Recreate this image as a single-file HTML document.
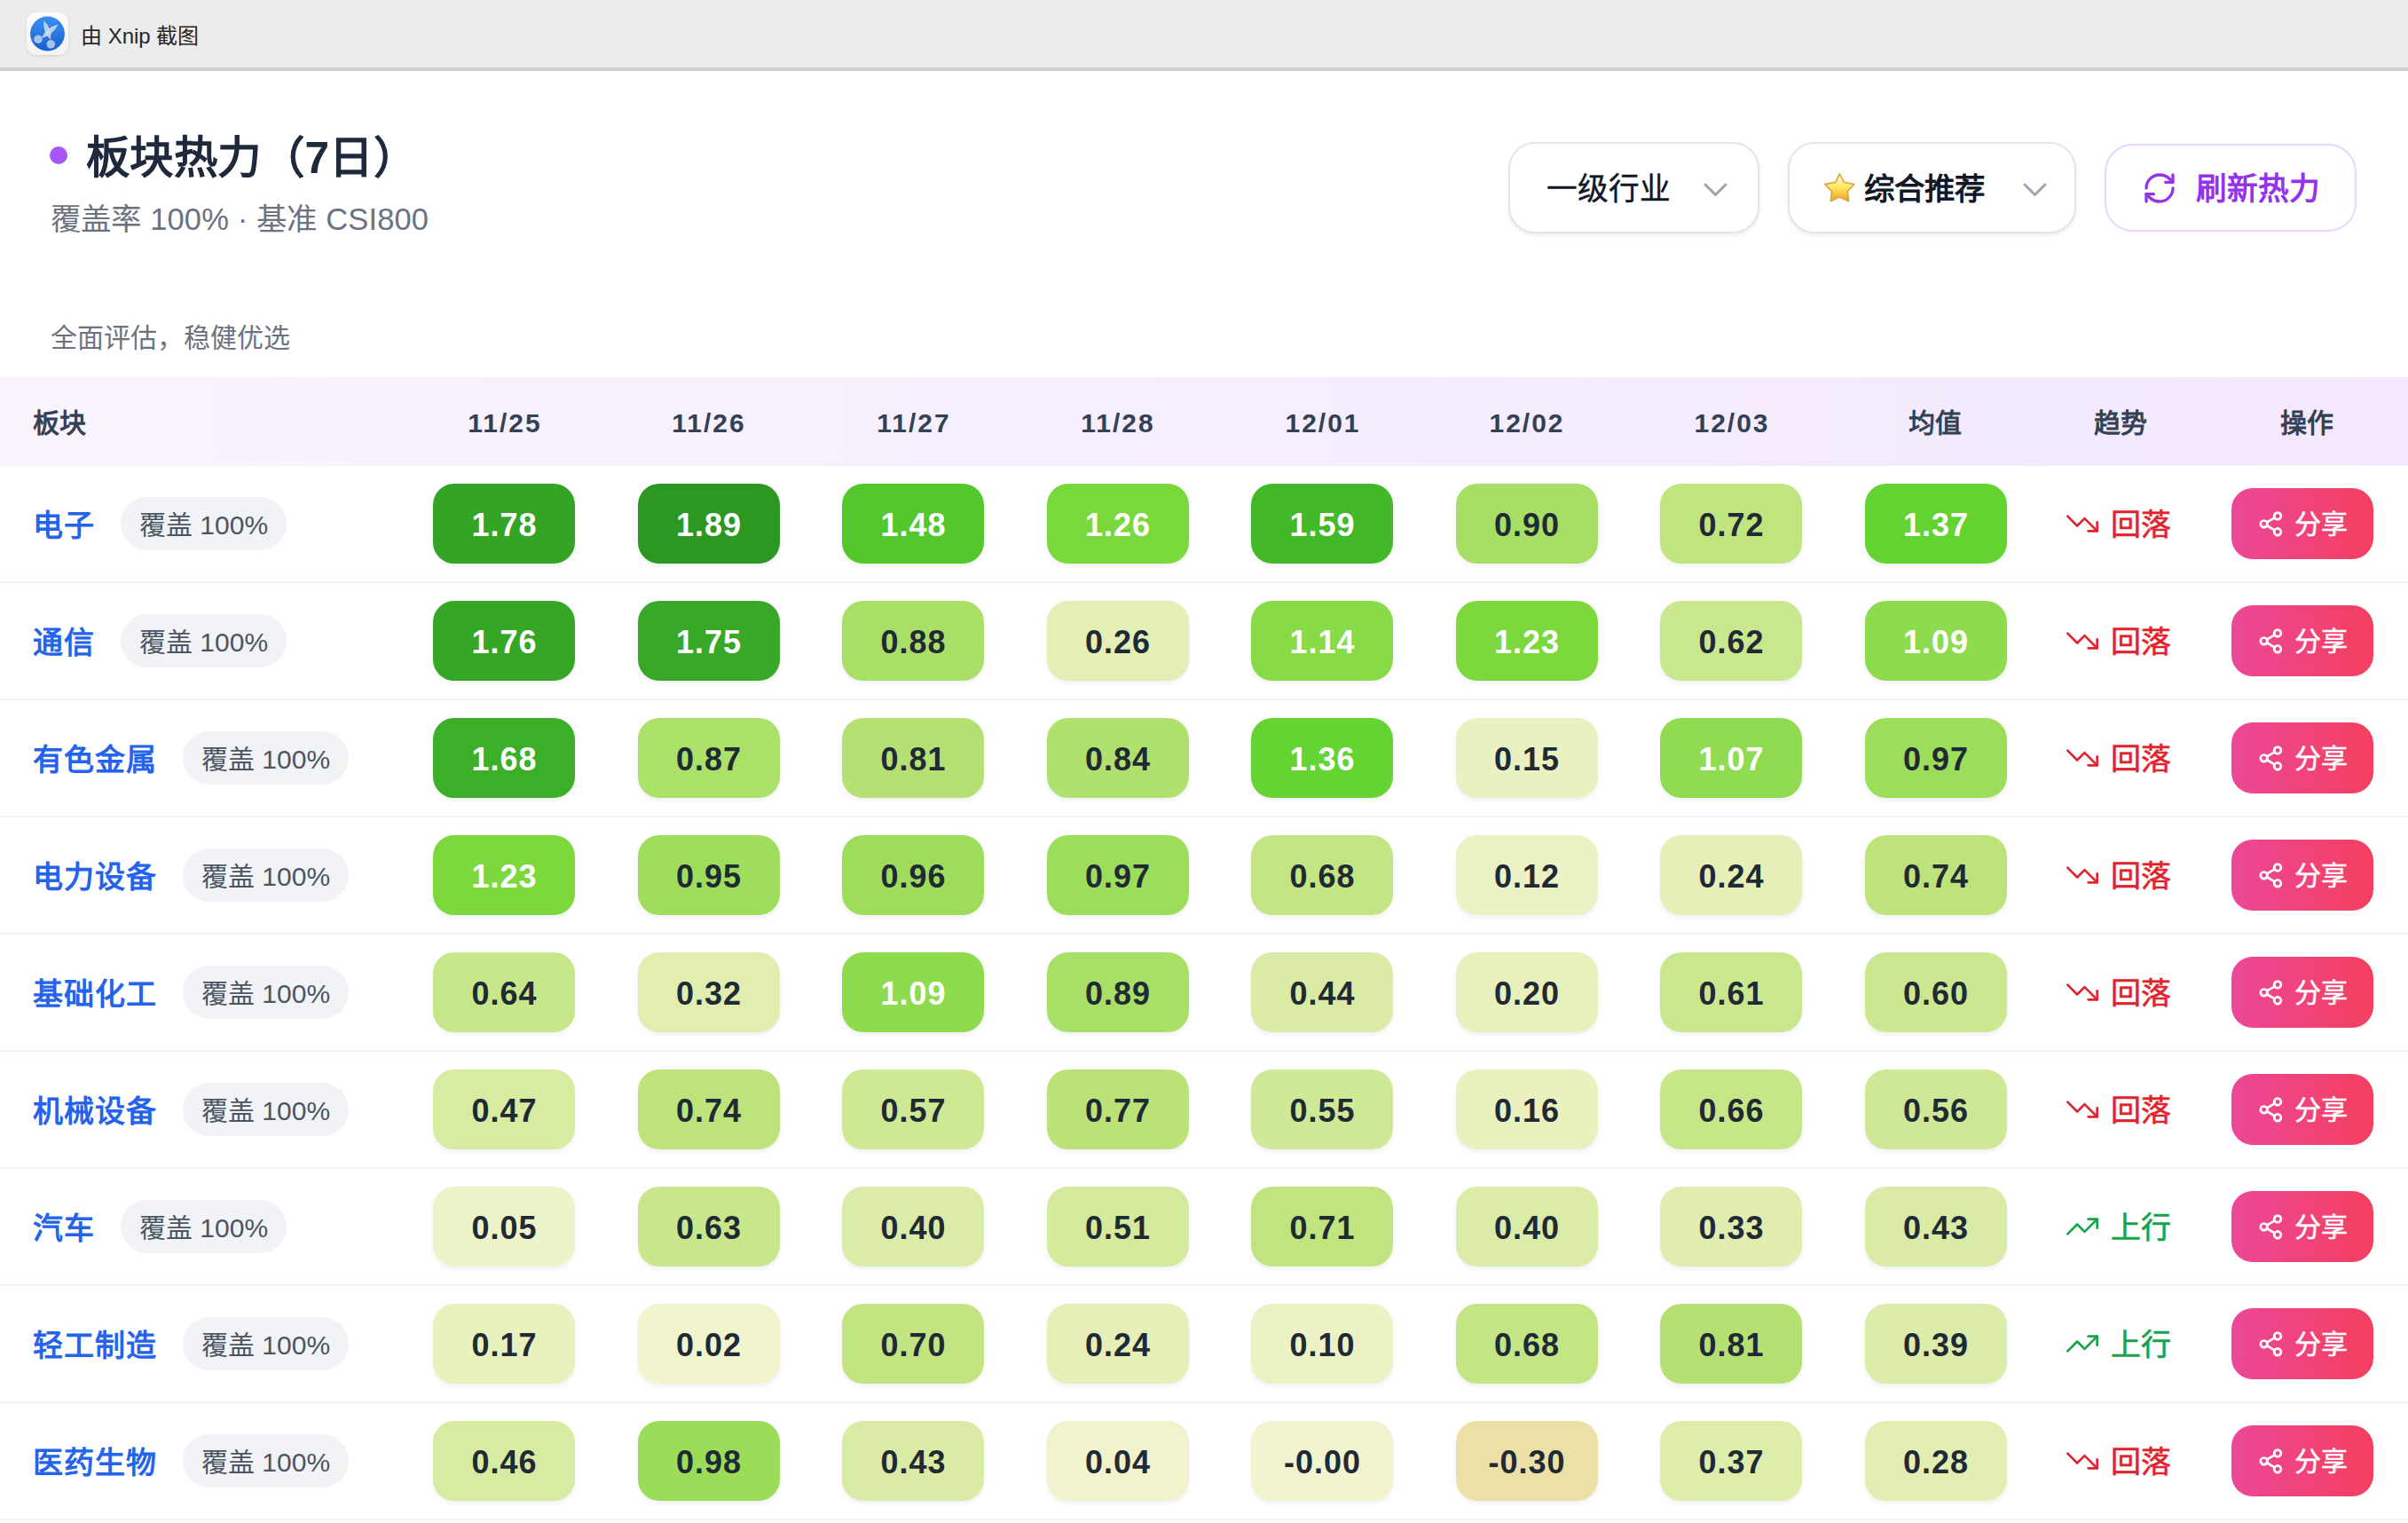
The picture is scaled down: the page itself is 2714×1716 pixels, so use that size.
<!DOCTYPE html>
<html lang="zh-CN">
<head>
<meta charset="utf-8">
<style>
*{box-sizing:border-box;margin:0;padding:0}
html,body{width:2714px;height:1716px;overflow:hidden;background:#fff}
body{position:relative;font-family:"Liberation Sans",sans-serif;color:#1f2937}
.abs{position:absolute;white-space:nowrap}
#topbar{position:absolute;left:0;top:0;width:2714px;height:76px;background:#ececec}
#topline{position:absolute;left:0;top:76px;width:2714px;height:4px;background:#d1d1d1}
#appicon{position:absolute;left:30px;top:14px;width:47px;height:48px;border-radius:11px;background:linear-gradient(#fdfdfd,#f3f3f3);box-shadow:0 1px 3px rgba(0,0,0,.12)}
#appicon .c{position:absolute;left:4px;top:5px;width:39px;height:39px;border-radius:50%;background:radial-gradient(circle at 40% 30%,#3d8df0,#1f6fdc 70%,#1a63cf)}
#toptext{left:91px;top:24.5px;font-size:24px;line-height:32px;color:#262626}

#dot{position:absolute;left:56px;top:165px;width:20px;height:20px;border-radius:50%;background:#a855f7}
#title{left:97px;top:146px;font-size:49.5px;letter-spacing:0.3px;line-height:64px;font-weight:700;color:#1e293b}
#subtitle{left:57px;top:223px;font-size:34.5px;letter-spacing:0.15px;line-height:48px;color:#6b7280}
#desc{left:57px;top:360.5px;font-size:30px;line-height:40px;color:#6b7280}

.sel{position:absolute;top:160px;height:102.5px;border:2px solid #e3e5ea;border-radius:30px;background:#fff;box-shadow:0 2px 4px rgba(0,0,0,.08)}
.sel .t{position:absolute;top:0;line-height:97px;font-size:36px;white-space:nowrap;color:#111827}
.chev{position:absolute;top:43px}
#refresh{position:absolute;left:2372px;top:162px;width:284px;height:99px;border:2px solid #e9d5ff;border-radius:32px;background:#fff}

#thead{position:absolute;left:0;top:425px;width:2714px;height:100px;background:linear-gradient(90deg,#f9f4fd,#f3e8fd)}
.th{position:absolute;top:2px;line-height:100px;font-size:30px;font-weight:700;color:#334155;white-space:nowrap}
.th.c{transform:translateX(-50%)}

.row{position:absolute;left:0;width:2714px;height:132px;border-bottom:2px solid #f4f4f7}
.name{position:absolute;left:37px;top:2px;letter-spacing:1px;line-height:130px;font-size:34px;font-weight:700;color:#2563eb;white-space:nowrap}
.badge{position:absolute;top:35px;height:60px;line-height:64px;padding:0 21px;border-radius:30px;background:#f2f3f6;color:#4b5563;font-size:30px;white-space:nowrap}
.cell{position:absolute;top:20px;width:160px;height:90px;border-radius:24px;line-height:93px;text-align:center;font-size:36px;font-weight:700;color:#1f2a35;letter-spacing:1px;text-indent:1px;box-shadow:0 3px 5px rgba(0,0,0,.06)}
.cell.w{color:#fff}
.trend{position:absolute;top:0;height:130px;font-size:34px;line-height:133px;-webkit-text-stroke:0.6px currentColor;white-space:nowrap}
.trend svg{position:absolute;left:1px;top:45px}
.trend span{position:absolute;left:53px;top:0}
.down{color:#e0242e}
.up{color:#16a34a}
.share{position:absolute;left:2515px;top:25px;width:160px;height:80px;border-radius:24px;background:linear-gradient(90deg,#ec4899,#f43f5e);color:#fff;font-size:30px;line-height:82px;-webkit-text-stroke:0.5px #fff}
.share svg{position:absolute;left:29px;top:25px}
.share span{position:absolute;left:71px;top:0;white-space:nowrap}
</style>
</head>
<body>
<div id="topbar"></div>
<div id="topline"></div>
<div id="appicon"><svg width="47" height="48" viewBox="0 0 47 48" style="position:absolute;left:0;top:0"><defs><linearGradient id="bg1" x1="0" y1="0" x2="0" y2="1"><stop offset="0" stop-color="#3a8ff2"/><stop offset="1" stop-color="#1a5fd0"/></linearGradient></defs><circle cx="23.5" cy="24" r="19.4" fill="url(#bg1)"/><path d="M19.5 9.0Q17.6 21.9 27.0 31.0Q28.9 18.1 19.5 9.0Z" fill="#c6d8f0" fill-opacity=".9"/><path d="M35.5 13.5Q22.2 16.6 16.5 29.0Q29.8 25.9 35.5 13.5Z" fill="#c6d8f0" fill-opacity=".9"/><circle cx="13" cy="30.2" r="4.8" fill="#a9c2e8"/><circle cx="27.3" cy="35.8" r="4.8" fill="#a9c2e8"/></svg></div>
<div id="toptext" class="abs">由 Xnip 截图</div>

<div id="dot"></div>
<div id="title" class="abs">板块热力（7日）</div>
<div id="subtitle" class="abs">覆盖率 100% · 基准 CSI800</div>
<div id="desc" class="abs">全面评估，稳健优选</div>

<!-- controls -->
<div class="sel" style="left:1700px;width:283px">
  <div class="t" style="left:40.5px;font-size:34.7px;top:3px;-webkit-text-stroke:0.4px #111827">一级行业</div>
  <svg class="chev" style="left:217px" width="30" height="20" viewBox="0 0 30 20"><polyline points="3,3 14.5,14.5 26,3" fill="none" stroke="#9ca3af" stroke-width="3" stroke-linecap="round" stroke-linejoin="round"/></svg>
</div>
<div class="sel" style="left:2015px;width:325px">
  <svg style="position:absolute;left:37px;top:31px" width="40" height="38" viewBox="0 0 40 38"><defs><linearGradient id="sg" x1="0" y1="0" x2="0" y2="1"><stop offset="0" stop-color="#fffad0"/><stop offset=".5" stop-color="#fde85e"/><stop offset="1" stop-color="#f2a11e"/></linearGradient></defs><path d="M19.3 2.8 L24.4 12.2 L35.8 14.6 L28.5 22.4 L29.6 33.7 L19.3 29.1 L9.3 33.7 L10.4 22.4 L2.7 14.6 L15 12.2 Z" fill="url(#sg)" stroke="#dca646" stroke-width="1.6" stroke-linejoin="round"/></svg>
  <div class="t" style="left:84px;font-weight:700;font-size:34.5px;top:3px">综合推荐</div>
  <svg class="chev" style="left:262px" width="30" height="20" viewBox="0 0 30 20"><polyline points="3,3 14.5,14.5 26,3" fill="none" stroke="#9ca3af" stroke-width="3" stroke-linecap="round" stroke-linejoin="round"/></svg>
</div>
<div id="refresh">
  <svg style="position:absolute;left:40px;top:28px" width="40" height="40" viewBox="0 0 24 24" fill="none" stroke="#9333ea" stroke-width="2" stroke-linecap="round" stroke-linejoin="round"><path d="M3 12a9 9 0 0 1 9-9 9.75 9.75 0 0 1 6.74 2.74L21 8"/><path d="M21 3v5h-5"/><path d="M21 12a9 9 0 0 1-9 9 9.75 9.75 0 0 1-6.74-2.74L3 16"/><path d="M8 16H3v5"/></svg>
  <div class="abs" style="left:101px;top:0;line-height:99px;font-size:34.7px;font-weight:700;color:#9333ea">刷新热力</div>
</div>

<!-- table header -->
<div id="thead">
  <div class="th" style="left:37px">板块</div>
  <div class="th c" style="left:569px;letter-spacing:2px">11/25</div>
  <div class="th c" style="left:799px;letter-spacing:2px">11/26</div>
  <div class="th c" style="left:1030px;letter-spacing:2px">11/27</div>
  <div class="th c" style="left:1260px;letter-spacing:2px">11/28</div>
  <div class="th c" style="left:1491px;letter-spacing:2px">12/01</div>
  <div class="th c" style="left:1721px;letter-spacing:2px">12/02</div>
  <div class="th c" style="left:1952px;letter-spacing:2px">12/03</div>
  <div class="th c" style="left:2181px">均值</div>
  <div class="th c" style="left:2390px">趋势</div>
  <div class="th c" style="left:2600px">操作</div>
</div>

<div id="rows"><div class="row" style="top:525px"><div class="name">电子</div><div class="badge" style="left:136px">覆盖 100%</div><div class="cell w" style="left:488px;background:#34a426">1.78</div><div class="cell w" style="left:718.5px;background:#2c9822">1.89</div><div class="cell w" style="left:949px;background:#52c82c">1.48</div><div class="cell w" style="left:1179.5px;background:#79d83b">1.26</div><div class="cell w" style="left:1410px;background:#43b92a">1.59</div><div class="cell" style="left:1640.5px;background:#a7df64">0.90</div><div class="cell" style="left:1871px;background:#c0e47e">0.72</div><div class="cell w" style="left:2101.5px;background:#62d331">1.37</div><div class="trend down" style="left:2326px"><svg width="40" height="40" viewBox="0 0 24 24" fill="none" stroke="currentColor" stroke-width="1.6" stroke-linecap="round" stroke-linejoin="round"><polyline points="22 17 13.5 8.5 8.5 13.5 2 7"/><polyline points="16 17 22 17 22 11"/></svg><span>回落</span></div><div class="share"><svg width="30.7" height="30.7" viewBox="0 0 24 24" fill="none" stroke="#fff" stroke-width="2.1" stroke-linecap="round" stroke-linejoin="round"><circle cx="18" cy="5" r="3"/><circle cx="6" cy="12" r="3"/><circle cx="18" cy="19" r="3"/><line x1="8.59" y1="13.51" x2="15.42" y2="17.49"/><line x1="15.41" y1="6.51" x2="8.59" y2="10.49"/></svg><span>分享</span></div></div>
<div class="row" style="top:657px"><div class="name">通信</div><div class="badge" style="left:136px">覆盖 100%</div><div class="cell w" style="left:488px;background:#36a627">1.76</div><div class="cell w" style="left:718.5px;background:#37a827">1.75</div><div class="cell" style="left:949px;background:#aadf67">0.88</div><div class="cell" style="left:1179.5px;background:#e4efb5">0.26</div><div class="cell w" style="left:1410px;background:#88da47">1.14</div><div class="cell w" style="left:1640.5px;background:#7dd83e">1.23</div><div class="cell" style="left:1871px;background:#c9e78d">0.62</div><div class="cell w" style="left:2101.5px;background:#8edb4d">1.09</div><div class="trend down" style="left:2326px"><svg width="40" height="40" viewBox="0 0 24 24" fill="none" stroke="currentColor" stroke-width="1.6" stroke-linecap="round" stroke-linejoin="round"><polyline points="22 17 13.5 8.5 8.5 13.5 2 7"/><polyline points="16 17 22 17 22 11"/></svg><span>回落</span></div><div class="share"><svg width="30.7" height="30.7" viewBox="0 0 24 24" fill="none" stroke="#fff" stroke-width="2.1" stroke-linecap="round" stroke-linejoin="round"><circle cx="18" cy="5" r="3"/><circle cx="6" cy="12" r="3"/><circle cx="18" cy="19" r="3"/><line x1="8.59" y1="13.51" x2="15.42" y2="17.49"/><line x1="15.41" y1="6.51" x2="8.59" y2="10.49"/></svg><span>分享</span></div></div>
<div class="row" style="top:789px"><div class="name">有色金属</div><div class="badge" style="left:206px">覆盖 100%</div><div class="cell w" style="left:488px;background:#3caf28">1.68</div><div class="cell" style="left:718.5px;background:#abe069">0.87</div><div class="cell" style="left:949px;background:#b4e171">0.81</div><div class="cell" style="left:1179.5px;background:#b0e06d">0.84</div><div class="cell w" style="left:1410px;background:#64d432">1.36</div><div class="cell" style="left:1640.5px;background:#eaf1c0">0.15</div><div class="cell w" style="left:1871px;background:#90db4f">1.07</div><div class="cell" style="left:2101.5px;background:#9cdd5a">0.97</div><div class="trend down" style="left:2326px"><svg width="40" height="40" viewBox="0 0 24 24" fill="none" stroke="currentColor" stroke-width="1.6" stroke-linecap="round" stroke-linejoin="round"><polyline points="22 17 13.5 8.5 8.5 13.5 2 7"/><polyline points="16 17 22 17 22 11"/></svg><span>回落</span></div><div class="share"><svg width="30.7" height="30.7" viewBox="0 0 24 24" fill="none" stroke="#fff" stroke-width="2.1" stroke-linecap="round" stroke-linejoin="round"><circle cx="18" cy="5" r="3"/><circle cx="6" cy="12" r="3"/><circle cx="18" cy="19" r="3"/><line x1="8.59" y1="13.51" x2="15.42" y2="17.49"/><line x1="15.41" y1="6.51" x2="8.59" y2="10.49"/></svg><span>分享</span></div></div>
<div class="row" style="top:921px"><div class="name">电力设备</div><div class="badge" style="left:206px">覆盖 100%</div><div class="cell w" style="left:488px;background:#7dd83e">1.23</div><div class="cell" style="left:718.5px;background:#9fdd5d">0.95</div><div class="cell" style="left:949px;background:#9edd5c">0.96</div><div class="cell" style="left:1179.5px;background:#9cdd5a">0.97</div><div class="cell" style="left:1410px;background:#c4e584">0.68</div><div class="cell" style="left:1640.5px;background:#ecf2c3">0.12</div><div class="cell" style="left:1871px;background:#e6efb7">0.24</div><div class="cell" style="left:2101.5px;background:#bee37b">0.74</div><div class="trend down" style="left:2326px"><svg width="40" height="40" viewBox="0 0 24 24" fill="none" stroke="currentColor" stroke-width="1.6" stroke-linecap="round" stroke-linejoin="round"><polyline points="22 17 13.5 8.5 8.5 13.5 2 7"/><polyline points="16 17 22 17 22 11"/></svg><span>回落</span></div><div class="share"><svg width="30.7" height="30.7" viewBox="0 0 24 24" fill="none" stroke="#fff" stroke-width="2.1" stroke-linecap="round" stroke-linejoin="round"><circle cx="18" cy="5" r="3"/><circle cx="6" cy="12" r="3"/><circle cx="18" cy="19" r="3"/><line x1="8.59" y1="13.51" x2="15.42" y2="17.49"/><line x1="15.41" y1="6.51" x2="8.59" y2="10.49"/></svg><span>分享</span></div></div>
<div class="row" style="top:1053px"><div class="name">基础化工</div><div class="badge" style="left:206px">覆盖 100%</div><div class="cell" style="left:488px;background:#c8e68a">0.64</div><div class="cell" style="left:718.5px;background:#e1eeaf">0.32</div><div class="cell w" style="left:949px;background:#8edb4d">1.09</div><div class="cell" style="left:1179.5px;background:#a8df66">0.89</div><div class="cell" style="left:1410px;background:#d9eba4">0.44</div><div class="cell" style="left:1640.5px;background:#e8f0bb">0.20</div><div class="cell" style="left:1871px;background:#cae78e">0.61</div><div class="cell" style="left:2101.5px;background:#cbe790">0.60</div><div class="trend down" style="left:2326px"><svg width="40" height="40" viewBox="0 0 24 24" fill="none" stroke="currentColor" stroke-width="1.6" stroke-linecap="round" stroke-linejoin="round"><polyline points="22 17 13.5 8.5 8.5 13.5 2 7"/><polyline points="16 17 22 17 22 11"/></svg><span>回落</span></div><div class="share"><svg width="30.7" height="30.7" viewBox="0 0 24 24" fill="none" stroke="#fff" stroke-width="2.1" stroke-linecap="round" stroke-linejoin="round"><circle cx="18" cy="5" r="3"/><circle cx="6" cy="12" r="3"/><circle cx="18" cy="19" r="3"/><line x1="8.59" y1="13.51" x2="15.42" y2="17.49"/><line x1="15.41" y1="6.51" x2="8.59" y2="10.49"/></svg><span>分享</span></div></div>
<div class="row" style="top:1185px"><div class="name">机械设备</div><div class="badge" style="left:206px">覆盖 100%</div><div class="cell" style="left:488px;background:#d7eba1">0.47</div><div class="cell" style="left:718.5px;background:#bee37b">0.74</div><div class="cell" style="left:949px;background:#cee894">0.57</div><div class="cell" style="left:1179.5px;background:#bae277">0.77</div><div class="cell" style="left:1410px;background:#d0e997">0.55</div><div class="cell" style="left:1640.5px;background:#eaf1bf">0.16</div><div class="cell" style="left:1871px;background:#c6e687">0.66</div><div class="cell" style="left:2101.5px;background:#cfe895">0.56</div><div class="trend down" style="left:2326px"><svg width="40" height="40" viewBox="0 0 24 24" fill="none" stroke="currentColor" stroke-width="1.6" stroke-linecap="round" stroke-linejoin="round"><polyline points="22 17 13.5 8.5 8.5 13.5 2 7"/><polyline points="16 17 22 17 22 11"/></svg><span>回落</span></div><div class="share"><svg width="30.7" height="30.7" viewBox="0 0 24 24" fill="none" stroke="#fff" stroke-width="2.1" stroke-linecap="round" stroke-linejoin="round"><circle cx="18" cy="5" r="3"/><circle cx="6" cy="12" r="3"/><circle cx="18" cy="19" r="3"/><line x1="8.59" y1="13.51" x2="15.42" y2="17.49"/><line x1="15.41" y1="6.51" x2="8.59" y2="10.49"/></svg><span>分享</span></div></div>
<div class="row" style="top:1317px"><div class="name">汽车</div><div class="badge" style="left:136px">覆盖 100%</div><div class="cell" style="left:488px;background:#eff3ca">0.05</div><div class="cell" style="left:718.5px;background:#c9e68b">0.63</div><div class="cell" style="left:949px;background:#dbeca8">0.40</div><div class="cell" style="left:1179.5px;background:#d4ea9d">0.51</div><div class="cell" style="left:1410px;background:#c1e480">0.71</div><div class="cell" style="left:1640.5px;background:#dbeca8">0.40</div><div class="cell" style="left:1871px;background:#e0edae">0.33</div><div class="cell" style="left:2101.5px;background:#d9eba5">0.43</div><div class="trend up" style="left:2326px"><svg width="40" height="40" viewBox="0 0 24 24" fill="none" stroke="currentColor" stroke-width="1.6" stroke-linecap="round" stroke-linejoin="round"><polyline points="22 7 13.5 15.5 8.5 10.5 2 17"/><polyline points="16 7 22 7 22 13"/></svg><span>上行</span></div><div class="share"><svg width="30.7" height="30.7" viewBox="0 0 24 24" fill="none" stroke="#fff" stroke-width="2.1" stroke-linecap="round" stroke-linejoin="round"><circle cx="18" cy="5" r="3"/><circle cx="6" cy="12" r="3"/><circle cx="18" cy="19" r="3"/><line x1="8.59" y1="13.51" x2="15.42" y2="17.49"/><line x1="15.41" y1="6.51" x2="8.59" y2="10.49"/></svg><span>分享</span></div></div>
<div class="row" style="top:1449px"><div class="name">轻工制造</div><div class="badge" style="left:206px">覆盖 100%</div><div class="cell" style="left:488px;background:#e9f1be">0.17</div><div class="cell" style="left:718.5px;background:#f1f4cd">0.02</div><div class="cell" style="left:949px;background:#c2e481">0.70</div><div class="cell" style="left:1179.5px;background:#e6efb7">0.24</div><div class="cell" style="left:1410px;background:#edf2c5">0.10</div><div class="cell" style="left:1640.5px;background:#c4e584">0.68</div><div class="cell" style="left:1871px;background:#b4e171">0.81</div><div class="cell" style="left:2101.5px;background:#dceca9">0.39</div><div class="trend up" style="left:2326px"><svg width="40" height="40" viewBox="0 0 24 24" fill="none" stroke="currentColor" stroke-width="1.6" stroke-linecap="round" stroke-linejoin="round"><polyline points="22 7 13.5 15.5 8.5 10.5 2 17"/><polyline points="16 7 22 7 22 13"/></svg><span>上行</span></div><div class="share"><svg width="30.7" height="30.7" viewBox="0 0 24 24" fill="none" stroke="#fff" stroke-width="2.1" stroke-linecap="round" stroke-linejoin="round"><circle cx="18" cy="5" r="3"/><circle cx="6" cy="12" r="3"/><circle cx="18" cy="19" r="3"/><line x1="8.59" y1="13.51" x2="15.42" y2="17.49"/><line x1="15.41" y1="6.51" x2="8.59" y2="10.49"/></svg><span>分享</span></div></div>
<div class="row" style="top:1581px"><div class="name">医药生物</div><div class="badge" style="left:206px">覆盖 100%</div><div class="cell" style="left:488px;background:#d8eba2">0.46</div><div class="cell" style="left:718.5px;background:#9bdd59">0.98</div><div class="cell" style="left:949px;background:#d9eba5">0.43</div><div class="cell" style="left:1179.5px;background:#f0f3cb">0.04</div><div class="cell" style="left:1410px;background:#f2f4cf">-0.00</div><div class="cell" style="left:1640.5px;background:#ece0a6">-0.30</div><div class="cell" style="left:1871px;background:#ddedaa">0.37</div><div class="cell" style="left:2101.5px;background:#e3eeb3">0.28</div><div class="trend down" style="left:2326px"><svg width="40" height="40" viewBox="0 0 24 24" fill="none" stroke="currentColor" stroke-width="1.6" stroke-linecap="round" stroke-linejoin="round"><polyline points="22 17 13.5 8.5 8.5 13.5 2 7"/><polyline points="16 17 22 17 22 11"/></svg><span>回落</span></div><div class="share"><svg width="30.7" height="30.7" viewBox="0 0 24 24" fill="none" stroke="#fff" stroke-width="2.1" stroke-linecap="round" stroke-linejoin="round"><circle cx="18" cy="5" r="3"/><circle cx="6" cy="12" r="3"/><circle cx="18" cy="19" r="3"/><line x1="8.59" y1="13.51" x2="15.42" y2="17.49"/><line x1="15.41" y1="6.51" x2="8.59" y2="10.49"/></svg><span>分享</span></div></div></div>
<!--ROWS-->
</body>
</html>
